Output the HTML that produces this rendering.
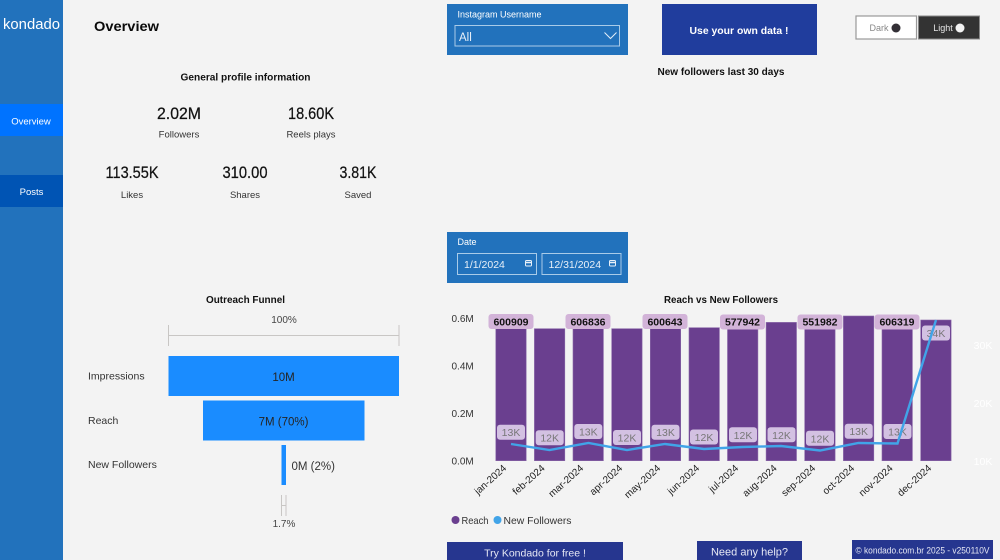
<!DOCTYPE html>
<html>
<head>
<meta charset="utf-8">
<style>
html,body{margin:0;padding:0;width:1000px;height:560px;overflow:hidden;background:#f3f3f3}
svg{display:block;filter:blur(0.3px)}
text{font-family:"Liberation Sans",sans-serif;fill:#252423}
.m{text-anchor:middle}
.b{font-weight:bold}
.w{fill:#fff}
.big{font-size:17px;text-anchor:middle;fill:#111;stroke:#111;stroke-width:0.25px}
.sm{font-size:9.500px;text-anchor:middle;fill:#333}
.ttl{font-size:10.500px;font-weight:bold;text-anchor:middle;fill:#111}
.ax{font-size:10px;fill:#333}
.xl{font-size:10px;text-anchor:end;fill:#222}
.top{font-size:10.500px;font-weight:bold;text-anchor:middle;fill:#111}
.lo{font-size:10.500px;text-anchor:middle;fill:#777}
.f{font-size:11px;fill:#333}
</style>
</head>
<body>
<svg width="1000" height="560" viewBox="0 0 1000 560" xmlns="http://www.w3.org/2000/svg">
<rect width="1000" height="560" fill="#f3f3f3"/>

<!-- Sidebar -->
<rect x="0" y="0" width="63" height="560" fill="#2272bc"/>
<text x="3" y="29" class="w" style="font-size:15px" textLength="57" lengthAdjust="spacingAndGlyphs">kondado</text>
<rect x="0" y="104" width="63" height="32" fill="#0073ff"/>
<text x="31" y="124.500" class="m w" style="font-size:9.500px">Overview</text>
<rect x="0" y="175" width="63" height="32" fill="#0054b4"/>
<text x="31.500" y="195" class="m w" style="font-size:9.500px">Posts</text>

<text x="94" y="31" class="b" style="font-size:14px;fill:#0a0a0a" textLength="65" lengthAdjust="spacingAndGlyphs">Overview</text>

<!-- KPIs -->
<text x="245.500" y="80.500" class="ttl" textLength="130" lengthAdjust="spacingAndGlyphs">General profile information</text>
<text x="179" y="119" class="big" textLength="44" lengthAdjust="spacingAndGlyphs">2.02M</text>
<text x="179" y="137.500" class="sm">Followers</text>
<text x="311" y="119" class="big" textLength="46" lengthAdjust="spacingAndGlyphs">18.60K</text>
<text x="311" y="137.500" class="sm">Reels plays</text>
<text x="132" y="178" class="big" textLength="53" lengthAdjust="spacingAndGlyphs">113.55K</text>
<text x="132" y="198" class="sm">Likes</text>
<text x="245" y="178" class="big" textLength="45" lengthAdjust="spacingAndGlyphs">310.00</text>
<text x="245" y="198" class="sm">Shares</text>
<text x="358" y="178" class="big" textLength="37" lengthAdjust="spacingAndGlyphs">3.81K</text>
<text x="358" y="198" class="sm">Saved</text>

<!-- Username slicer -->
<rect x="447" y="4" width="181" height="51" fill="#2272bc"/>
<text x="457.500" y="17.500" class="w" style="font-size:9px">Instagram Username</text>
<rect x="455" y="25.500" width="164.500" height="20.500" fill="none" stroke="#a9cbe8" stroke-width="1"/>
<text x="459" y="41" class="w" style="font-size:11.500px;fill:#e8f0f8">All</text>
<path d="M604.500 32.500l6 6 6-6" fill="none" stroke="#e3eef8" stroke-width="1"/>

<!-- Use your own data -->
<rect x="662" y="4" width="155" height="51" fill="#203d9d"/>
<text x="739" y="34" class="m b w" style="font-size:10.500px" textLength="99" lengthAdjust="spacingAndGlyphs">Use your own data !</text>

<!-- Theme toggle -->
<rect x="856" y="16" width="60.500" height="23" fill="#fff" stroke="#999" stroke-width="1.200"/>
<text x="879" y="31" class="m" style="font-size:9px;fill:#888">Dark</text>
<circle cx="896" cy="28" r="4.500" fill="#333036"/>
<rect x="918.500" y="16" width="61" height="23" fill="#333" stroke="#888" stroke-width="1"/>
<text x="943" y="31" class="m" style="font-size:9px;fill:#e5e5e5">Light</text>
<circle cx="960" cy="28" r="4.500" fill="#f3f3f3"/>

<text x="721" y="75" class="ttl" textLength="127" lengthAdjust="spacingAndGlyphs">New followers last 30 days</text>

<!-- Date slicer -->
<rect x="447" y="232" width="181" height="51" fill="#2272bc"/>
<text x="457.500" y="245" class="w" style="font-size:9px">Date</text>
<rect x="457.500" y="253.500" width="79" height="21" fill="none" stroke="#a9cbe8"/>
<text x="464" y="268" class="w" style="font-size:10.500px;fill:#e8f0f8">1/1/2024</text>
<rect x="542" y="253.500" width="79" height="21" fill="none" stroke="#a9cbe8"/>
<text x="548.500" y="268" class="w" style="font-size:10.500px;fill:#e8f0f8">12/31/2024</text>
<g fill="none" stroke="#e8f0f8">
<rect x="525.500" y="260.500" width="6" height="5.500" rx="1"/><path d="M525.500 262.500h6" stroke-width="1.500"/>
<rect x="609.500" y="260.500" width="6" height="5.500" rx="1"/><path d="M609.500 262.500h6" stroke-width="1.500"/>
</g>

<!-- Funnel -->
<text x="245.500" y="303" class="ttl" textLength="79" lengthAdjust="spacingAndGlyphs">Outreach Funnel</text>
<text x="284" y="323" class="m" style="font-size:10px;fill:#444">100%</text>
<path d="M168.500 325v21M399 325v21M168.500 335.500H399" fill="none" stroke="#c8c6c4" stroke-width="1"/>
<rect x="168.500" y="356" width="230.500" height="40" fill="#1a8cff"/>
<text x="283.500" y="381" class="m" style="font-size:11.500px;fill:#252423">10M</text>
<rect x="203" y="400.500" width="161.500" height="40" fill="#1a8cff"/>
<text x="283.500" y="425.500" class="m" style="font-size:11.500px;fill:#252423">7M (70%)</text>
<rect x="281.500" y="445" width="4.500" height="40" fill="#1a8cff"/>
<text x="291.500" y="470" style="font-size:11.500px;fill:#333">0M (2%)</text>
<path d="M281.500 495v21M286 495v21M281.500 505.500H286" fill="none" stroke="#c8c6c4" stroke-width="1"/>
<text x="284" y="527" class="m" style="font-size:10px;fill:#444">1.7%</text>
<text x="88" y="379.500" class="f" style="font-size:10.500px">Impressions</text>
<text x="88" y="424" class="f" style="font-size:10.500px">Reach</text>
<text x="88" y="468" class="f" style="font-size:10.500px">New Followers</text>

<!-- Chart -->
<text x="721" y="303" class="ttl" textLength="114" lengthAdjust="spacingAndGlyphs">Reach vs New Followers</text>
<text x="451.500" y="322" class="ax">0.6M</text>
<text x="451.500" y="369.500" class="ax">0.4M</text>
<text x="451.500" y="417" class="ax">0.2M</text>
<text x="451.500" y="464.500" class="ax">0.0M</text>

<g fill="#6a3f8f" stroke="#8a68a8" stroke-width="0.600">
<rect x="495.800" y="318" width="30.400" height="142.700"/>
<rect x="534.400" y="328.700" width="30.400" height="132"/>
<rect x="573" y="316.500" width="30.400" height="144.200"/>
<rect x="611.700" y="328.700" width="30.400" height="132"/>
<rect x="650.300" y="318" width="30.400" height="142.700"/>
<rect x="689" y="327.700" width="30.400" height="133"/>
<rect x="727.500" y="323" width="30.400" height="137.700"/>
<rect x="766.100" y="322.400" width="30.400" height="138.300"/>
<rect x="804.700" y="329" width="30.400" height="131.700"/>
<rect x="843.400" y="316" width="30.400" height="144.700"/>
<rect x="882" y="316.700" width="30.400" height="144"/>
<rect x="920.700" y="320" width="30.400" height="140.700"/>
</g>

<!-- Top labels -->
<g fill="#d2b3d8">
<rect x="488.500" y="314" width="45" height="15" rx="3"/>
<rect x="565.500" y="314" width="45" height="15" rx="3"/>
<rect x="642.500" y="314" width="45" height="15" rx="3"/>
<rect x="720" y="314.500" width="45" height="15" rx="3"/>
<rect x="797.500" y="314.500" width="45" height="15" rx="3"/>
<rect x="874.500" y="314.500" width="45" height="15" rx="3"/>
</g>
<text x="511" y="325.500" class="top">600909</text>
<text x="588" y="325.500" class="top">606836</text>
<text x="665" y="325.500" class="top">600643</text>
<text x="742.500" y="325.500" class="top">577942</text>
<text x="820" y="325.500" class="top">551982</text>
<text x="897" y="325.500" class="top">606319</text>

<!-- Low labels -->
<g fill="#d3c1e2">
<rect x="497" y="424.700" width="28" height="15" rx="3"/>
<rect x="535.700" y="430.300" width="28" height="15" rx="3"/>
<rect x="574.300" y="424" width="28" height="15" rx="3"/>
<rect x="613" y="430" width="28" height="15" rx="3"/>
<rect x="651.500" y="424.700" width="28" height="15" rx="3"/>
<rect x="690" y="429.500" width="28" height="15" rx="3"/>
<rect x="729" y="427.300" width="28" height="15" rx="3"/>
<rect x="767.500" y="427.300" width="28" height="15" rx="3"/>
<rect x="806" y="430.800" width="28" height="15" rx="3"/>
<rect x="844.700" y="423.700" width="28" height="15" rx="3"/>
<rect x="883.500" y="424" width="28" height="15" rx="3"/>
<rect x="922" y="325.500" width="28" height="15" rx="3"/>
</g>
<text x="511" y="436" class="lo">13K</text>
<text x="549.700" y="441.500" class="lo">12K</text>
<text x="588.300" y="435.500" class="lo">13K</text>
<text x="627" y="441.500" class="lo">12K</text>
<text x="665.500" y="436" class="lo">13K</text>
<text x="704" y="441" class="lo">12K</text>
<text x="743" y="438.800" class="lo">12K</text>
<text x="781.500" y="438.800" class="lo">12K</text>
<text x="820" y="442.300" class="lo">12K</text>
<text x="858.700" y="435" class="lo">13K</text>
<text x="897.500" y="435.500" class="lo">13K</text>
<text x="936" y="337" class="lo">34K</text>

<polyline points="511,444 549.500,450 588.500,443 627,450 665,444 704,449 742.500,447 781,446 820,450.500 858.500,443 897.500,443.500 936,320" fill="none" stroke="#41a4e8" stroke-width="2.400"/>

<!-- Secondary axis -->
<text x="983" y="349" class="m w" style="font-size:10.500px">30K</text>
<text x="983" y="407" class="m w" style="font-size:10.500px">20K</text>
<text x="983" y="465" class="m w" style="font-size:10.500px">10K</text>

<!-- X labels -->
<g>
<text class="xl" transform="translate(507,469) rotate(-42)">jan-2024</text>
<text class="xl" transform="translate(545.500,469) rotate(-42)">feb-2024</text>
<text class="xl" transform="translate(584,469) rotate(-42)">mar-2024</text>
<text class="xl" transform="translate(623,469) rotate(-42)">apr-2024</text>
<text class="xl" transform="translate(661,469) rotate(-42)">may-2024</text>
<text class="xl" transform="translate(700,469) rotate(-42)">jun-2024</text>
<text class="xl" transform="translate(739,469) rotate(-42)">jul-2024</text>
<text class="xl" transform="translate(777.500,469) rotate(-42)">aug-2024</text>
<text class="xl" transform="translate(816,469) rotate(-42)">sep-2024</text>
<text class="xl" transform="translate(855,469) rotate(-42)">oct-2024</text>
<text class="xl" transform="translate(893.500,469) rotate(-42)">nov-2024</text>
<text class="xl" transform="translate(932,469) rotate(-42)">dec-2024</text>
</g>

<!-- Legend -->
<circle cx="455.500" cy="520" r="4" fill="#6a3f8f"/>
<text x="461.500" y="524" style="font-size:10.500px;fill:#333" textLength="27" lengthAdjust="spacingAndGlyphs">Reach</text>
<circle cx="497.500" cy="520" r="4" fill="#41a4e8"/>
<text x="503.500" y="524" style="font-size:10.500px;fill:#333" textLength="68" lengthAdjust="spacingAndGlyphs">New Followers</text>

<!-- Bottom buttons -->
<rect x="447" y="542" width="176" height="18" fill="#26368f"/>
<text x="535" y="556.500" class="m" style="font-size:10.500px;fill:#e6e8f4">Try Kondado for free !</text>
<rect x="697" y="541" width="105" height="19" fill="#26368f"/>
<text x="749.500" y="555.500" class="m" style="font-size:11px;fill:#e6e8f4">Need any help?</text>
<rect x="852" y="540" width="141" height="19" fill="#26368f"/>
<text x="922.500" y="553.500" class="m" style="font-size:9px;fill:#e6e8f4" textLength="134" lengthAdjust="spacingAndGlyphs">© kondado.com.br 2025 - v250110V</text>
</svg>
</body>
</html>
